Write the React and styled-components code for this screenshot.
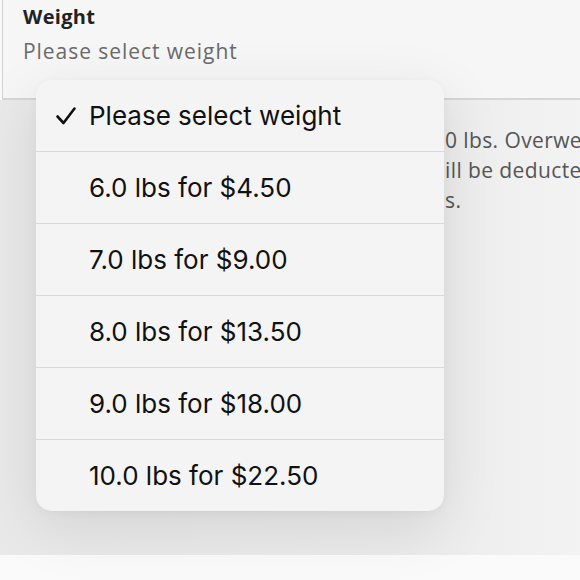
import styled, { createGlobalStyle } from 'styled-components'

const GlobalStyle = createGlobalStyle`
  html, body {
    margin: 0;
    padding: 0;
    background: #fafafa;
  }
  #root {
    width: 580px;
    height: 580px;
    overflow: hidden;
  }
`

const options = [
  '6.0 lbs for $4.50',
  '7.0 lbs for $9.00',
  '8.0 lbs for $13.50',
  '9.0 lbs for $18.00',
  '10.0 lbs for $22.50',
]

const App = () => {
  return (
    <Page>
      <GlobalStyle />
      <Field>
        <Label>Weight</Label>
        <Placeholder>Please select weight</Placeholder>
      </Field>
      <Body>
        <Note>
          <span>0 lbs. Overweight packages will be charged extra.</span>
          <span>ill be deducted from your account balance.</span>
          <span>s.</span>
        </Note>
      </Body>
      <Footer />
      <Menu>
        <Option selected>
          <Check>
            <svg width="22" height="20" viewBox="0 0 22 20">
              <path d="M2.5 10.5 L8.5 17 L19.5 2.5" fill="none" stroke="#111" strokeWidth="2.6" strokeLinecap="round" strokeLinejoin="round" />
            </svg>
          </Check>
          Please select weight
        </Option>
        {options.map((o) => (
          <Option key={o}>{o}</Option>
        ))}
      </Menu>
    </Page>
  )
}

export default App

const Page = styled.div`
  position: relative;
  width: 580px;
  height: 580px;
  display: flex;
  flex-direction: column;
  font-family: 'Open Sans', Lato, sans-serif;
`

const Field = styled.div`
  height: 100px;
  box-sizing: border-box;
  margin-left: 2px;
  padding: 3px 0 0 20px;
  background: #f6f6f6;
  border-left: 1px solid #d2d2d2;
  border-bottom: 2px solid #d6d6d6;
  display: flex;
  flex-direction: column;
  gap: 6px;
`

const Label = styled.div`
  font-size: 20px;
  font-weight: 700;
  color: #222;
  line-height: 27px;
  letter-spacing: 0.3px;
`

const Placeholder = styled.div`
  font-size: 21px;
  color: #6a6a6a;
  line-height: 30px;
  letter-spacing: 0.95px;
`

const Body = styled.div`
  flex: 1;
  background: linear-gradient(90deg, #e9e9e9 0%, #ebebeb 70%, #f3f3f3 100%);
  padding-top: 25px;
`

const Note = styled.div`
  margin-left: 445px;
  overflow: hidden;
  display: flex;
  flex-direction: column;
  font-size: 21px;
  line-height: 30px;
  color: #555;
  letter-spacing: 0.4px;
  white-space: nowrap;
`

const Footer = styled.div`
  height: 25px;
  background: #fafafa;
`

const Menu = styled.div`
  position: absolute;
  left: 36px;
  top: 80px;
  width: 408px;
  background: #f4f4f4;
  border-radius: 16px;
  box-shadow: 0 16px 60px rgba(0, 0, 0, 0.1), 0 2px 10px rgba(0, 0, 0, 0.04);
  overflow: hidden;
`

const Option = styled.div`
  position: relative;
  height: 71px;
  display: flex;
  align-items: center;
  padding-left: 53px;
  font-family: Inter, 'Liberation Sans', sans-serif;
  font-size: 26px;
  color: #111;
  & + & {
    border-top: 1px solid #dadada;
  }
`

const Check = styled.span`
  position: absolute;
  left: 19px;
  top: 26px;
  display: flex;
`
